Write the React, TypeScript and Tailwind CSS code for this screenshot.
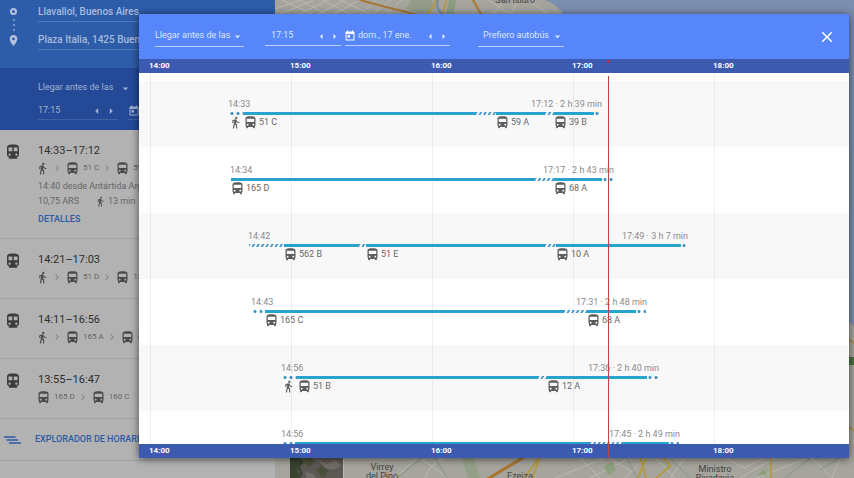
import { Fragment } from "react";
import {
  MdArrowDropDown,
  MdArrowLeft,
  MdArrowRight,
  MdChevronRight,
  MdClose,
  MdDirectionsBus,
  MdDirectionsTransit,
  MdDirectionsWalk,
  MdPlace,
  MdToday,
} from "react-icons/md";

type SegmentKind = "walk" | "ride" | "wait";

interface Segment {
  kind: SegmentKind;
  length: number;
  line?: string;
  walkIcon?: boolean;
}

interface Trip {
  departure: string;
  summary: string;
  start: number;
  end: number;
  segments: Segment[];
}

// The timeline is 710 units wide and one hour takes 141 of them
const TIMELINE = 710;
const HOUR = 141;
const FIRST_HOUR = 11;
const ARRIVAL_LIMIT = 469;

const hours = ["14:00", "15:00", "16:00", "17:00", "18:00"];

const trips: Trip[] = [
  {
    departure: "14:33",
    summary: "17:12 · 2 h 39 min",
    start: 90,
    end: 462,
    segments: [
      { kind: "walk", length: 15, walkIcon: true },
      { kind: "ride", length: 232, line: "51 C" },
      { kind: "wait", length: 20 },
      { kind: "ride", length: 49, line: "59 A" },
      { kind: "wait", length: 9 },
      { kind: "ride", length: 40, line: "39 B" },
      { kind: "walk", length: 7 },
    ],
  },
  {
    departure: "14:34",
    summary: "17:17 · 2 h 43 min",
    start: 92,
    end: 474,
    segments: [
      { kind: "ride", length: 304, line: "165 D" },
      { kind: "wait", length: 19 },
      { kind: "ride", length: 48, line: "68 A" },
      { kind: "walk", length: 11 },
    ],
  },
  {
    departure: "14:42",
    summary: "17:49 · 3 h 7 min",
    start: 110,
    end: 548,
    segments: [
      { kind: "wait", length: 35 },
      { kind: "ride", length: 75, line: "562 B" },
      { kind: "wait", length: 7 },
      { kind: "ride", length: 179, line: "51 E" },
      { kind: "wait", length: 11 },
      { kind: "ride", length: 125, line: "10 A" },
      { kind: "walk", length: 6 },
    ],
  },
  {
    departure: "14:43",
    summary: "17:31 · 2 h 48 min",
    start: 113,
    end: 507,
    segments: [
      { kind: "walk", length: 13 },
      { kind: "ride", length: 299, line: "165 C" },
      { kind: "wait", length: 23 },
      { kind: "ride", length: 49, line: "68 A" },
      { kind: "walk", length: 10 },
    ],
  },
  {
    departure: "14:56",
    summary: "17:36 · 2 h 40 min",
    start: 143,
    end: 519,
    segments: [
      { kind: "walk", length: 16, walkIcon: true },
      { kind: "ride", length: 240, line: "51 B" },
      { kind: "wait", length: 9 },
      { kind: "ride", length: 100, line: "12 A" },
      { kind: "walk", length: 11 },
    ],
  },
  {
    departure: "14:56",
    summary: "17:45 · 2 h 49 min",
    start: 143,
    end: 540,
    segments: [
      { kind: "walk", length: 13 },
      { kind: "ride", length: 295 },
      { kind: "wait", length: 32 },
      { kind: "ride", length: 47 },
      { kind: "walk", length: 10 },
    ],
  },
];

const routes = [
  { time: "14:33–17:12", walk: true, lines: ["51 C", "59 A"], details: true },
  { time: "14:21–17:03", walk: true, lines: ["51 D", "15 A"], details: false },
  { time: "14:11–16:56", walk: true, lines: ["165 A", "68 A"], details: false },
  { time: "13:55–16:47", walk: false, lines: ["165 D", "160 C"], details: false },
];

const percent = (units: number) => `${(units / TIMELINE) * 100}%`;

const barStyles: Record<SegmentKind, string> = {
  walk: "bg-[radial-gradient(circle,#3b8fc4_1px,transparent_2px)] bg-[length:6px_3px]",
  ride: "bg-[#28a3d0]",
  wait: "bg-[repeating-linear-gradient(120deg,#4a97cc_0px,#4a97cc_1px,#ffffff_2px,#ffffff_3px,#4a97cc_4px)]",
};

function MapBackground() {
  return (
    <svg
      className="h-full w-full"
      viewBox="275 0 579 478"
      preserveAspectRatio="xMinYMin slice"
      fontFamily="Roboto, sans-serif"
      aria-hidden="true"
    >
      <rect x="275" width="579" height="478" fill="#a5a49d" />
      <path d="M545 0C555 4 561 9 564 16L600 120 849 322 854 326V0Z" fill="#7b8fb0" />
      <path d="M411 0h20l5 8-14 6-16-5z" fill="#939c88" />
      <path d="M449 0h7l-2 14h-8z" fill="#8b9c83" />
      <g fill="none" stroke="#bab9b2" strokeWidth="1">
        <path d="M275 9l25-9M280 14l34-14M300 14l28-14M318 14l27-14M334 14l26-14M282 0l30 14M300 0l26 14M322 0l28 14M340 0l30 14M375 0l-13 14M391 0l-18 14M402 0l-15 14M489 0l20 14M505 0l-12 14M520 0l-10 14M528 0l20 14" />
        <path d="M395 478l22-20M420 458l28 20M425 478c3-10 10-16 20-20M555 478l50-20M580 458l20 20M590 478l40-20M610 458l22 14M625 478l20-20" />
        <path d="M655 458l20 20M670 478l15-20M725 458l20 10 18-10M740 478l35-20M757 478l50-20M811 458l22 20M840 458l-8 20" />
      </g>
      <g fill="none" stroke="#8f8f8a" strokeWidth="1">
        <path d="M397 478l24-20M447 478l-12-20M637 478l-10-20M690 478l-20-20M785 478l25-20M820 470l20-12" />
      </g>
      <path d="M355-2C376 6 398 9 424 17" fill="none" stroke="#a87834" strokeWidth="2" />
      <path d="M472-2l10 18" fill="none" stroke="#af792f" strokeWidth="2" />
      <path d="M436-2c0 8-6 12-10 18M447-2l-5 18" fill="none" stroke="#b59a4c" strokeWidth="2" />
      <path d="M438 0c-2 5-1 9 4 14" fill="none" stroke="#718ba5" strokeWidth="2" />
      <path d="M462 458l12 0 6 20h-12z" fill="#92a088" />
      <path d="M604 466l8-4 4 8-8 5z" fill="#8ba07a" />
      <path d="M486 480l40-24" fill="none" stroke="#a97530" strokeWidth="3" />
      <path d="M540 456l-8 24M524 478l12-16 5-6M640 456l6 22M646 458l-8 20M662 456l8 10-16 14M771 456v24" fill="none" stroke="#b49b45" strokeWidth="2" />
      <path d="M758 475l6-6 3 6z" fill="#8ba07a" />
      <path d="M847 338l8 6M847 426l8 5" stroke="#b08a48" strokeWidth="2" />
      <rect x="846" y="357" width="10" height="8" fill="#47703c" />
      <g fill="#42423f" fontSize="9" textAnchor="middle">
        <text x="515" y="3">San Isidro</text>
        <text x="382" y="470">Virrey</text>
        <text x="382" y="479">del Pino</text>
        <text x="520" y="479">Ezeiza</text>
        <text x="715" y="472">Ministro</text>
        <text x="715" y="481">Rivadavia</text>
      </g>
      <g>
        <rect x="290" y="425" width="54" height="54" fill="#b9b9b5" />
        <rect x="290" y="425" width="53" height="54" fill="#5c5955" />
        <path d="M290 456h9l5 6-4 5 3 7-4 6h-9z" fill="#37422f" />
        <path d="M302 460l8-4 5 6-6 5zM316 470l6-5 6 6-5 7zM296 468l5 3-2 6z" fill="#485039" />
        <path d="M318 460l9 4 8-4 6 5-7 5-9-2zM305 472l8 2 4 5h-10z" fill="#716d68" />
      </g>
    </svg>
  );
}

function RouteSteps({ walk, lines }: { walk: boolean; lines: string[] }) {
  return (
    <div className="flex h-4 items-center gap-0.5 text-[8px] text-[#666]">
      {walk && <MdDirectionsWalk size={13} className="-ml-0.5 shrink-0 text-[#4b4b4b]" />}
      {lines.map((line, i) => (
        <Fragment key={line}>
          {(walk || i > 0) && <MdChevronRight size={12} className="shrink-0 text-[#858585]" />}
          <MdDirectionsBus
            size={15}
            className={`shrink-0 text-[#4b4b4b] ${!walk && i === 0 ? "-ml-0.5" : ""}`}
          />
          <span className="ml-px whitespace-nowrap">{line}</span>
        </Fragment>
      ))}
    </div>
  );
}

function Sidebar() {
  return (
    <aside className="flex w-[275px] shrink-0 flex-col bg-[#b2b2b2] text-[9px] text-[#666]">
      <div className="flex h-[68px] bg-[#2d5ca9] pl-2 text-[10px] font-medium text-[#a8bbdb]">
        <div className="flex w-[30px] shrink-0 flex-col">
          <div className="flex w-[11px] flex-col items-center gap-[3px] pt-2">
            <span className="size-[7px] rounded-full border-2 border-[#b5c2d8]" />
            <span className="mt-px size-[2px] rounded-full bg-[#8fa8cf]" />
            <span className="size-[2px] rounded-full bg-[#8fa8cf]" />
            <span className="size-[2px] rounded-full bg-[#8fa8cf]" />
            <MdPlace size={13} className="shrink-0 text-[#b5c2d8]" />
          </div>
        </div>
        <div className="flex flex-1 flex-col gap-[6px] pr-4">
          <input
            aria-label="Origen"
            defaultValue="Llavallol, Buenos Aires"
            className="h-[22px] w-full border-b border-[#5279b7] pt-0.5 outline-none"
          />
          <input
            aria-label="Destino"
            defaultValue="Plaza Italia, 1425 Buenos Aires"
            className="h-[22px] w-full border-b border-[#5279b7] pt-0.5 outline-none"
          />
        </div>
      </div>

      <div className="h-[62px] bg-[#234997] pt-3 pl-[38px] text-[#a3b2d2]">
        <div className="flex h-4 w-[94px] items-center">
          <select aria-label="Tipo de salida" className="flex-1 appearance-none outline-none">
            <option>Llegar antes de las</option>
          </select>
          <MdArrowDropDown size={13} />
        </div>
        <div className="mt-[6px] flex h-[18px] gap-[10px]">
          <div className="flex w-20 items-center border-b border-[#3f60a4]">
            <input aria-label="Hora" defaultValue="17:15" className="w-0 flex-1 outline-none" />
            <button aria-label="Hora anterior"><MdArrowLeft size={14} /></button>
            <button aria-label="Hora siguiente"><MdArrowRight size={14} /></button>
          </div>
          <div className="flex w-[105px] items-center gap-1 border-b border-[#3f60a4]">
            <MdToday size={12} />
            <span>dom., 17 ene.</span>
          </div>
        </div>
      </div>

      {routes.map((route) => (
        <div key={route.time} className="flex border-b border-[#a2a2a2] py-[13px]">
          <MdDirectionsTransit size={18} className="ml-1 shrink-0 text-[#3c3c3c]" />
          <div className="ml-4 min-w-0 flex-1">
            <h2 className="h-4 text-[11px] leading-4 whitespace-nowrap text-[#2e2e2e]">{route.time}</h2>
            <div className="mt-px">
              <RouteSteps walk={route.walk} lines={route.lines} />
            </div>
            {route.details && (
              <div className="mt-[3px] leading-[15px] whitespace-nowrap">
                <p>14:40 desde Antártida Argentina</p>
                <p className="flex items-center">
                  10,75 ARS
                  <MdDirectionsWalk size={11} className="mr-0.5 ml-4 text-[#4b4b4b]" />
                  13 min
                </p>
                <a href="#detalles" className="block pt-1 leading-3 font-medium text-[#2a5ba8]">
                  DETALLES
                </a>
              </div>
            )}
          </div>
        </div>
      ))}

      <a
        href="#horarios"
        className="flex h-[42px] items-center gap-[14px] border-b border-[#a2a2a2] pl-1 font-medium whitespace-nowrap text-[#2a5ba8]"
      >
        <svg width="17" height="8" viewBox="0 0 17 8" fill="none" stroke="currentColor" strokeWidth="1.6">
          <path d="M0 1h11.5M2.5 4h11.5M5 7h12" />
        </svg>
        EXPLORADOR DE HORARIOS
      </a>
    </aside>
  );
}

function Toolbar() {
  return (
    <header className="flex h-[45px] shrink-0 items-center bg-[#5786fa] pr-[13px] pl-4 text-[9px] text-[#dce7ff]">
      <div className="flex h-5 w-[89px] items-center border-b border-[#bccffd]">
        <select aria-label="Tipo de salida" className="w-0 flex-1 appearance-none outline-none">
          <option>Llegar antes de las</option>
        </select>
        <MdArrowDropDown size={13} className="-ml-1" />
      </div>
      <div className="ml-[21px] flex h-[18px] w-[76px] items-center border-b border-[#bccffd] pl-[6px]">
        <input aria-label="Hora" defaultValue="17:15" className="w-0 flex-1 outline-none" />
        <button aria-label="Hora anterior"><MdArrowLeft size={13} /></button>
        <button aria-label="Hora siguiente"><MdArrowRight size={13} /></button>
      </div>
      <div className="ml-1 flex h-[18px] w-[105px] items-center border-b border-[#bccffd]">
        <MdToday size={12} className="mr-[2px] -ml-px text-white" />
        <input aria-label="Fecha" defaultValue="dom., 17 ene." className="w-0 flex-1 outline-none" />
        <button aria-label="Día anterior"><MdArrowLeft size={13} /></button>
        <button aria-label="Día siguiente"><MdArrowRight size={13} /></button>
      </div>
      <div className="ml-7 flex h-5 w-[86px] items-center border-b border-[#bccffd] pl-[5px]">
        <select aria-label="Medio preferido" className="w-0 flex-1 appearance-none outline-none">
          <option>Prefiero autobús</option>
        </select>
        <MdArrowDropDown size={13} />
      </div>
      <button aria-label="Cerrar" className="ml-auto text-white">
        <MdClose size={18} />
      </button>
    </header>
  );
}

function HourScale() {
  return (
    <div className="flex h-[14px] shrink-0 overflow-hidden bg-[#3c5ab0] text-[8px] leading-[13px] font-bold text-white">
      <div className="shrink-0" style={{ width: percent(FIRST_HOUR - 1) }} />
      {hours.map((hour) => (
        <div key={hour} className="shrink-0" style={{ width: percent(HOUR) }}>
          {hour}
        </div>
      ))}
    </div>
  );
}

function TripRow({ trip }: { trip: Trip }) {
  const length = trip.end - trip.start;
  return (
    <li className="h-[66px] shrink-0 pt-4 odd:bg-[#7f7f7f]/5">
      <div style={{ marginLeft: percent(trip.start), width: percent(length) }}>
        <div className="-mx-px flex h-[15px] justify-between leading-[15px] whitespace-nowrap text-[#8a8a8a]">
          <span>{trip.departure}</span>
          <span>{trip.summary}</span>
        </div>
        <div className="flex">
          {trip.segments.map((segment, i) => (
            <div key={i} className="shrink-0" style={{ width: `${(segment.length / length) * 100}%` }}>
              <div className={`h-[3px] ${barStyles[segment.kind]}`} />
              <div className="-ml-px flex h-[15px] w-0 items-center gap-px whitespace-nowrap">
                {segment.walkIcon && <MdDirectionsWalk size={13} className="ml-px shrink-0 text-[#5c5c5c]" />}
                {segment.line && (
                  <>
                    <MdDirectionsBus size={15} className="shrink-0 text-[#5c5c5c]" />
                    <span>{segment.line}</span>
                  </>
                )}
              </div>
            </div>
          ))}
        </div>
      </div>
    </li>
  );
}

function ScheduleExplorer() {
  return (
    <div
      role="dialog"
      aria-label="Explorador de horarios"
      className="absolute top-[14px] right-[5px] bottom-5 left-[139px] flex flex-col bg-white shadow-[0_1px_8px_rgba(0,0,0,0.6)]"
    >
      <Toolbar />
      <HourScale />
      <div className="relative min-h-0 flex-1 overflow-hidden pt-2 text-[9px] text-[#666]">
        {hours.map((hour, i) => (
          <span
            key={hour}
            className="absolute inset-y-0 w-px bg-[#efefef]"
            style={{ left: percent(FIRST_HOUR + i * HOUR) }}
          />
        ))}
        <ul className="relative">
          {trips.map((trip, i) => (
            <TripRow key={i} trip={trip} />
          ))}
        </ul>
      </div>
      <HourScale />
      {/* Hora límite de llegada */}
      <span
        className="absolute top-[62px] bottom-0 w-px bg-[#bd4543]"
        style={{ left: percent(ARRIVAL_LIMIT) }}
      />
      <span
        className="absolute top-[46px] -ml-px size-[3px] rounded-full bg-[#c02a4c]"
        style={{ left: percent(ARRIVAL_LIMIT) }}
      />
    </div>
  );
}

export default function App() {
  return (
    <div className="relative flex h-screen overflow-hidden bg-[#a5a49d] font-[Roboto,sans-serif]">
      <Sidebar />
      <main className="min-w-0 flex-1">
        <MapBackground />
      </main>
      <ScheduleExplorer />
    </div>
  );
}
